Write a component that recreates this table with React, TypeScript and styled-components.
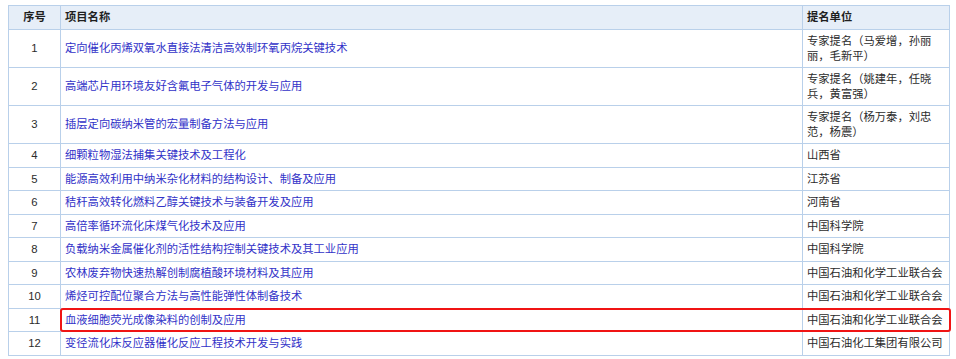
import React from "react";
import styled, { createGlobalStyle } from "styled-components";

const GlobalStyle = createGlobalStyle`
  html, body {
    margin: 0;
    padding: 0;
    background: #ffffff;
  }
  body {
    font-family: "Liberation Sans", "Noto Sans CJK SC", sans-serif;
  }
`;

type Item = {
  no: number;
  name: string;
  unit: string;
  marked?: boolean;
};

const items: Item[] = [
  { no: 1, name: "定向催化丙烯双氧水直接法清洁高效制环氧丙烷关键技术", unit: "专家提名（马爱增，孙丽丽，毛新平）" },
  { no: 2, name: "高端芯片用环境友好含氟电子气体的开发与应用", unit: "专家提名（姚建年，任晓兵，黄富强）" },
  { no: 3, name: "插层定向碳纳米管的宏量制备方法与应用", unit: "专家提名（杨万泰，刘忠范，杨震）" },
  { no: 4, name: "细颗粒物湿法捕集关键技术及工程化", unit: "山西省" },
  { no: 5, name: "能源高效利用中纳米杂化材料的结构设计、制备及应用", unit: "江苏省" },
  { no: 6, name: "秸秆高效转化燃料乙醇关键技术与装备开发及应用", unit: "河南省" },
  { no: 7, name: "高倍率循环流化床煤气化技术及应用", unit: "中国科学院" },
  { no: 8, name: "负载纳米金属催化剂的活性结构控制关键技术及其工业应用", unit: "中国科学院" },
  { no: 9, name: "农林废弃物快速热解创制腐植酸环境材料及其应用", unit: "中国石油和化学工业联合会" },
  { no: 10, name: "烯烃可控配位聚合方法与高性能弹性体制备技术", unit: "中国石油和化学工业联合会" },
  { no: 11, name: "血液细胞荧光成像染料的创制及应用", unit: "中国石油和化学工业联合会", marked: true },
  { no: 12, name: "变径流化床反应器催化反应工程技术开发与实践", unit: "中国石油化工集团有限公司" },
];

const UNIT_WIDTH = 147;

export default function App() {
  return (
    <Page>
      <GlobalStyle />
      <Table>
        <colgroup>
          <col style={{ width: 52 }} />
          <col />
          <col style={{ width: UNIT_WIDTH }} />
        </colgroup>
        <thead>
          <tr>
            <HeadCell $center>序号</HeadCell>
            <HeadCell>项目名称</HeadCell>
            <HeadCell>提名单位</HeadCell>
          </tr>
        </thead>
        <tbody>
          {items.map((item) => (
            <tr key={item.no}>
              <NoCell>{item.no}</NoCell>
              <NameCell $marked={item.marked}>
                <ProjectLink href="#">{item.name}</ProjectLink>
              </NameCell>
              <UnitCell>{item.unit}</UnitCell>
            </tr>
          ))}
        </tbody>
      </Table>
    </Page>
  );
}

const Page = styled.div`
  padding: 5px 0 0 8px;
  width: 956px;
  height: 359px;
  box-sizing: border-box;
`;

const Table = styled.table`
  width: 942px;
  border-collapse: collapse;
  table-layout: fixed;
  font-size: 11.3px;
  line-height: 14.5px;
  color: #2b2b2b;

  td,
  th {
    border: 1px solid #b9d0ea;
    padding: 4px 4px;
    vertical-align: middle;
  }
`;

const HeadCell = styled.th<{ $center?: boolean }>`
  background: #e6eef8;
  font-weight: bold;
  color: #1f1f1f;
  text-align: ${(p) => (p.$center ? "center" : "left")};
  height: 15px;
`;

const NoCell = styled.td`
  text-align: center;
`;

const NameCell = styled.td<{ $marked?: boolean }>`
  position: relative;
  text-align: left;

  ${(p) =>
    p.$marked &&
    `
    &::after {
      content: "";
      position: absolute;
      left: -1px;
      top: -1px;
      bottom: -1px;
      right: -${UNIT_WIDTH + 2}px;
      border: 2px solid #f01414;
      border-radius: 3px;
      pointer-events: none;
    }
  `}
`;

const ProjectLink = styled.a`
  color: #3232c8;
  text-decoration: none;
`;

const UnitCell = styled.td`
  text-align: left;
`;
